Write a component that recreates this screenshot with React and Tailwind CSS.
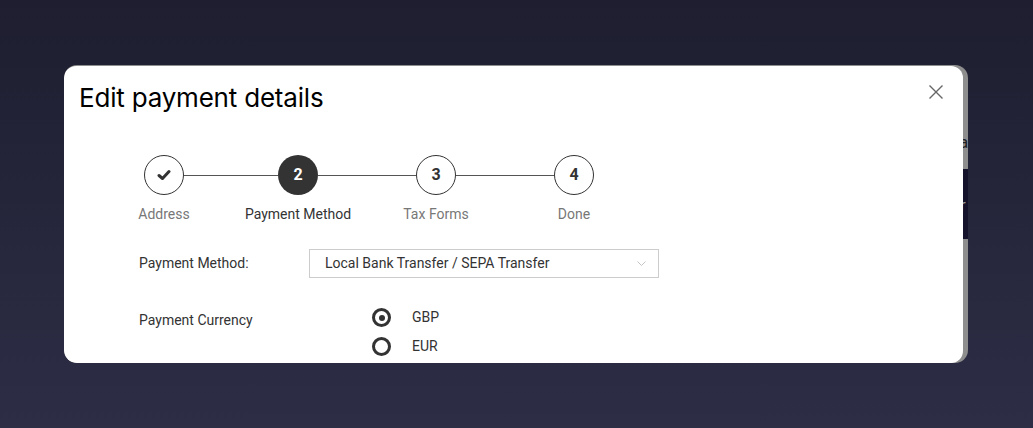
import { useState } from 'react'

const steps = [
  { label: 'Address', state: 'done' },
  { label: 'Payment Method', state: 'active' },
  { label: 'Tax Forms', state: 'todo' },
  { label: 'Done', state: 'todo' },
]

function Check() {
  return (
    <svg width="14" height="12" viewBox="0 0 14 12" fill="none">
      <path d="M2 6.5 L5.5 9.5 L12 2.5" stroke="#333" strokeWidth="3" strokeLinecap="round" strokeLinejoin="round" />
    </svg>
  )
}

function Step({ step, n }) {
  const active = step.state === 'active'
  return (
    <div className="flex flex-col items-center w-10">
      <div
        className={`w-10 h-10 rounded-full flex items-center justify-center text-[16px] font-bold ${
          active ? 'bg-[#333] text-white' : 'bg-white border border-[#333] text-[#333]'
        }`}
      >
        {step.state === 'done' ? <Check /> : n}
      </div>
      <div className={`mt-[10px] whitespace-nowrap text-[14px] leading-[18px] ${active ? 'text-[#333]' : 'text-[#777]'}`}>
        {step.label}
      </div>
    </div>
  )
}

function Radio({ checked, label, onClick }) {
  return (
    <button onClick={onClick} className="flex items-center h-[29px] text-left">
      <span className="w-[19px] h-[19px] rounded-full border-[3px] border-[#333] flex items-center justify-center">
        {checked && <span className="w-[6px] h-[6px] rounded-full bg-[#333]" />}
      </span>
      <span className="ml-[21px] text-[14px] text-[#333]">{label}</span>
    </button>
  )
}

export default function App() {
  const [currency, setCurrency] = useState('GBP')

  return (
    <div
      className="w-[1033px] h-[428px] overflow-hidden pt-[65px] pl-[64px] bg-gradient-to-b from-[#1e1e30] to-[#2d2e46]"
      style={{ fontFamily: 'Roboto, "Liberation Sans", sans-serif' }}
    >
      <div className="w-[904px] h-[298px] rounded-[13px] bg-[#8e8e8e] flex pt-px overflow-hidden">
        {/* modal */}
        <div className="relative w-[899px] h-full bg-white rounded-[12px] overflow-hidden">
          <button className="absolute right-[15px] top-[14px] p-1">
            <svg width="16" height="16" viewBox="0 0 16 16" fill="none">
              <path d="M1.5 1.5 L14.5 14.5 M14.5 1.5 L1.5 14.5" stroke="#666" strokeWidth="1.4" />
            </svg>
          </button>

          <h1
            className="pl-[15px] pt-[16px] text-[26px] leading-[32px] text-black tracking-[-0.2px]"
            style={{ fontFamily: 'Inter, "Liberation Sans", sans-serif' }}
          >
            Edit payment details
          </h1>

          {/* stepper */}
          <div className="flex items-start ml-[80px] mt-[41px]">
            <Step step={steps[0]} n={1} />
            <div className="w-[94px] h-px bg-[#555] mt-[20px]" />
            <Step step={steps[1]} n={2} />
            <div className="w-[98px] h-px bg-[#555] mt-[20px]" />
            <Step step={steps[2]} n={3} />
            <div className="w-[98px] h-px bg-[#555] mt-[20px]" />
            <Step step={steps[3]} n={4} />
          </div>

          {/* form */}
          <div className="ml-[75px] mt-[26px] text-[14px] text-[#333]">
            <div className="flex items-center">
              <div className="w-[170px]">Payment Method:</div>
              <div className="w-[350px] h-[29px] border border-[#ccc] flex items-center justify-between pl-[15px] pr-[12px]">
                <span>Local Bank Transfer / SEPA Transfer</span>
                <svg width="9" height="6" viewBox="0 0 9 6" fill="none">
                  <path d="M0.5 0.5 L4.5 4.5 L8.5 0.5" stroke="#c4c4c4" strokeWidth="1" />
                </svg>
              </div>
            </div>

            <div className="flex items-start mt-[25px]">
              <div className="w-[233px] h-[29px] flex items-center pt-[5px]">Payment Currency</div>
              <div className="flex flex-col">
                <Radio checked={currency === 'GBP'} label="GBP" onClick={() => setCurrency('GBP')} />
                <Radio checked={currency === 'EUR'} label="EUR" onClick={() => setCurrency('EUR')} />
              </div>
            </div>
          </div>
        </div>

        {/* page peeking behind the modal */}
        <div className="w-[5px] overflow-hidden flex flex-col" aria-hidden="true">
          <div className="mt-[66px] -ml-[4px] text-[17px] leading-[20px] text-[#222]">a</div>
          <div className="mt-[17px] h-[70px] bg-[#15122b] -ml-[3px] pt-[26px] text-[17px] leading-[20px] text-[#9a9a9a]">r</div>
        </div>
      </div>
    </div>
  )
}
